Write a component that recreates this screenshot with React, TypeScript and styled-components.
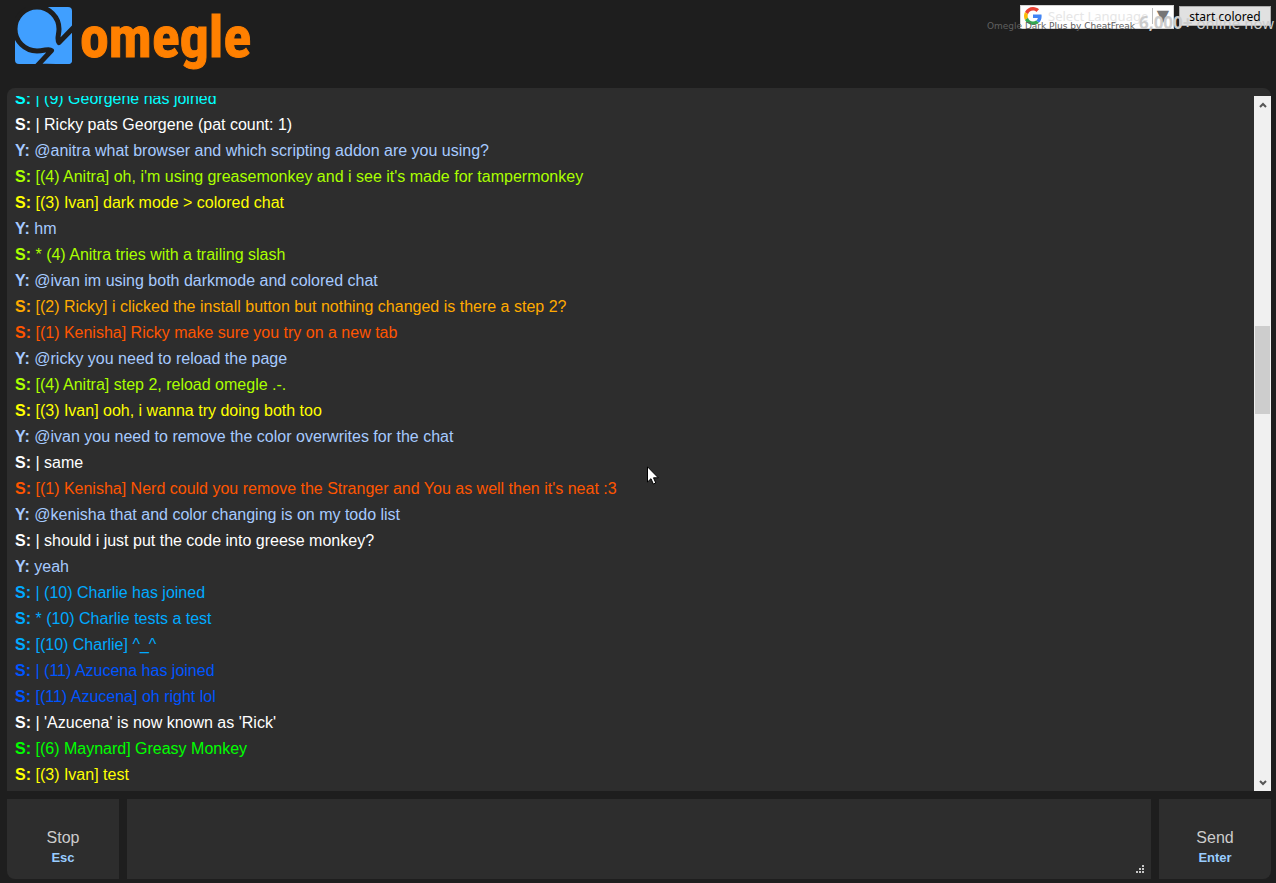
import React from "react";
import styled, { createGlobalStyle } from "styled-components";

const Global = createGlobalStyle`
  * { box-sizing: border-box; }
  body { margin: 0; background: #1e1e1e; font-family: "Liberation Sans", Arial, sans-serif; font-size: 16px; }
`;

const Page = styled.div`
  display: flex;
  flex-direction: column;
  height: 100vh;
  padding: 0 5px 4px 7px;
`;

const Header = styled.header`
  position: relative;
  display: flex;
  justify-content: space-between;
  align-items: flex-start;
  flex: none;
  height: 88px;
  padding: 5px 0 0 8px;
`;

const Brand = styled.a`
  display: flex;
  gap: 8px;
  padding-top: 2px;
  color: #ff8000;
  text-decoration: none;
`;

const Wordmark = styled.span`
  font: bold 58px/60px "Liberation Sans Narrow", "Roboto Condensed", "Open Sans", sans-serif;
  -webkit-text-stroke: 1px #ff8000;
`;

const Tools = styled.div`
  display: flex;
  gap: 5px;
`;

const Translate = styled.button`
  display: flex;
  align-items: center;
  width: 154px;
  height: 24px;
  padding: 0 4px 2px 3px;
  border: 1px solid #d5d5d5;
  background: #fff;
  color: #e6e6e6;
  font: 13px "Noto Sans", sans-serif;
  white-space: nowrap;

  svg { flex: none; }
`;

const Language = styled.span`
  flex: 1;
  padding-left: 6px;
  text-align: left;
`;

const Arrow = styled.span`
  border-left: 1px solid #bbb;
  padding-left: 4px;
  color: #767676;
  font: 16px/16px "DejaVu Sans", sans-serif;
`;

const StartButton = styled.button`
  width: 92px;
  height: 20px;
  margin-top: 1px;
  padding: 0;
  border: 1px solid #adadad;
  background: #e1e1e1;
  color: #000;
  font: 12px "Noto Sans", sans-serif;
`;

const Status = styled.div`
  position: absolute;
  top: 13px;
  right: -3px;
  display: flex;
  align-items: baseline;
  gap: 4px;
  white-space: nowrap;
  pointer-events: none;
  color: #ccc;
  font: 15px/20px "Noto Sans", sans-serif;

  b { font-size: 17px; }
`;

const Credit = styled.span`
  color: #606060;
  font: 9px/20px "DejaVu Sans", sans-serif;
`;

const Chat = styled.main`
  display: flex;
  flex: 1;
  min-height: 0;
  padding-top: 8px;
  border-radius: 8px 8px 0 0;
  background: #2d2d2d;
`;

const Log = styled.div`
  display: flex;
  flex: 1;
  flex-direction: column;
  justify-content: flex-end;
  overflow: hidden;
  padding: 0 8px 3px;
`;

const Message = styled.p<{ $color: string }>`
  flex: none;
  margin: 0;
  line-height: 26px;
  color: ${(p) => p.$color};
`;

const Scrollbar = styled.div`
  display: flex;
  flex-direction: column;
  width: 17px;
  padding: 0 1px;
  background: #f0f0f0;
`;

const ScrollButton = styled.button`
  display: flex;
  flex: none;
  align-items: center;
  justify-content: center;
  height: 17px;
  padding: 0;
  border: 0;
  background: none;
`;

const Track = styled.div`
  display: flex;
  flex: 1;
  flex-direction: column;
`;

const Space = styled.div<{ $grow: number }>`
  flex: ${(p) => p.$grow} 0 0;
`;

const Thumb = styled.div`
  flex: 88 0 0;
  background: #cdcdcd;
`;

const Controls = styled.footer`
  display: flex;
  flex: none;
  gap: 8px;
  height: 80px;
  margin-top: 8px;
`;

const ChatButton = styled.button<{ $corner: string }>`
  display: flex;
  flex: none;
  flex-direction: column;
  align-items: center;
  justify-content: flex-start;
  width: 112px;
  padding: 29px 0 0;
  border: 0;
  border-radius: ${(p) => p.$corner};
  background: #2d2d2d;
  color: #ccc;
  font: 16px/20px "Liberation Sans", Arial, sans-serif;
`;

const Shortcut = styled.span`
  color: #9cf;
  font-size: 13px;
  font-weight: bold;
`;

const Composer = styled.div`
  position: relative;
  display: flex;
  flex: 1;
`;

const Input = styled.textarea`
  flex: 1;
  padding: 8px;
  border: 0;
  outline: 0;
  resize: none;
  background: #2d2d2d;
  color: #ccc;
  font: inherit;
`;

const Grip = styled.svg`
  position: absolute;
  right: 7px;
  bottom: 6px;
`;

const Pointer = styled.svg`
  position: fixed;
  left: 647px;
  top: 466px;
  pointer-events: none;
`;

const cyan = "#00ffff";
const white = "#ffffff";
const you = "#a6caff";
const lime = "#aaff00";
const yellow = "#ffff00";
const orange = "#ffaa00";
const red = "#ff5500";
const sky = "#00aaff";
const blue = "#0055ff";
const green = "#00ff00";

const messages: [string, string, string][] = [
  ["S:", "| (9) Georgene has joined", cyan],
  ["S:", "| Ricky pats Georgene (pat count: 1)", white],
  ["Y:", "@anitra what browser and which scripting addon are you using?", you],
  ["S:", "[(4) Anitra] oh, i'm using greasemonkey and i see it's made for tampermonkey", lime],
  ["S:", "[(3) Ivan] dark mode > colored chat", yellow],
  ["Y:", "hm", you],
  ["S:", "* (4) Anitra tries with a trailing slash", lime],
  ["Y:", "@ivan im using both darkmode and colored chat", you],
  ["S:", "[(2) Ricky] i clicked the install button but nothing changed is there a step 2?", orange],
  ["S:", "[(1) Kenisha] Ricky make sure you try on a new tab", red],
  ["Y:", "@ricky you need to reload the page", you],
  ["S:", "[(4) Anitra] step 2, reload omegle .-.", lime],
  ["S:", "[(3) Ivan] ooh, i wanna try doing both too", yellow],
  ["Y:", "@ivan you need to remove the color overwrites for the chat", you],
  ["S:", "| same", white],
  ["S:", "[(1) Kenisha] Nerd could you remove the Stranger and You as well then it's neat :3", red],
  ["Y:", "@kenisha that and color changing is on my todo list", you],
  ["S:", "| should i just put the code into greese monkey?", white],
  ["Y:", "yeah", you],
  ["S:", "| (10) Charlie has joined", sky],
  ["S:", "* (10) Charlie tests a test", sky],
  ["S:", "[(10) Charlie] ^_^", sky],
  ["S:", "| (11) Azucena has joined", blue],
  ["S:", "[(11) Azucena] oh right lol", blue],
  ["S:", "| 'Azucena' is now known as 'Rick'", white],
  ["S:", "[(6) Maynard] Greasy Monkey", green],
  ["S:", "[(3) Ivan] test", yellow],
];

const LogoMark = () => (
  <svg width="57" height="57" viewBox="0 0 57 57" aria-hidden="true">
    <clipPath id="tile"><rect width="57" height="57" rx="4" /></clipPath>
    <g clipPath="url(#tile)">
      <path d="M33 0H57V57H0V33Z" fill="#409fff" />
      <path
        d="M22 59L36.500 43.500C34 41 30 44 22 44A22 22 0 0 1 22 0C34 0 44 10 44 22C44 28 41.500 32 44 35.500L60 19V60Z"
        fill="#409fff"
        stroke="#1e1e1e"
        strokeWidth="5"
        strokeLinejoin="round"
      />
    </g>
  </svg>
);

const GoogleMark = () => (
  <svg width="18" height="18" viewBox="0 0 48 48" aria-hidden="true">
    <path fill="#EA4335" d="M24 9.5c3.54 0 6.71 1.22 9.21 3.6l6.85-6.85C35.9 2.38 30.47 0 24 0 14.62 0 6.51 5.38 2.56 13.22l7.98 6.19C12.43 13.72 17.74 9.5 24 9.5z" />
    <path fill="#4285F4" d="M46.98 24.55c0-1.57-.15-3.09-.38-4.55H24v9.02h12.94c-.58 2.96-2.26 5.48-4.78 7.18l7.73 6c4.51-4.18 7.09-10.36 7.09-17.65z" />
    <path fill="#FBBC05" d="M10.53 28.59c-.48-1.45-.76-2.99-.76-4.59s.27-3.14.76-4.59l-7.98-6.19C.92 16.46 0 20.12 0 24c0 3.88.92 7.54 2.56 10.78l7.97-6.19z" />
    <path fill="#34A853" d="M24 48c6.48 0 11.93-2.13 15.89-5.81l-7.73-6c-2.15 1.45-4.92 2.3-8.16 2.3-6.26 0-11.57-4.22-13.47-9.91l-7.98 6.19C6.51 42.62 14.62 48 24 48z" />
  </svg>
);

export default function App() {
  return (
    <>
      <Global />
      <Page>
        <Header>
          <Brand href="#">
            <LogoMark />
            <Wordmark>omegle</Wordmark>
          </Brand>
          <Tools>
            <Translate>
              <GoogleMark />
              <Language>Select Language</Language>
              <Arrow>▼</Arrow>
            </Translate>
            <StartButton>start colored</StartButton>
          </Tools>
          <Status>
            <Credit>Omegle Dark Plus by CheatFreak</Credit>
            <span><b>6,000+</b> online now</span>
          </Status>
        </Header>
        <Chat>
          <Log>
            {messages.map(([who, text, color], i) => (
              <Message key={i} $color={color}>
                <b>{who}</b> {text}
              </Message>
            ))}
          </Log>
          <Scrollbar>
            <ScrollButton aria-label="Scroll up">
              <svg width="8" height="6" viewBox="0 0 8 6"><path d="M1 5L4 2L7 5" fill="none" stroke="#555" strokeWidth="2" /></svg>
            </ScrollButton>
            <Track>
              <Space $grow={213} />
              <Thumb />
              <Space $grow={360} />
            </Track>
            <ScrollButton aria-label="Scroll down">
              <svg width="8" height="6" viewBox="0 0 8 6"><path d="M1 1L4 4L7 1" fill="none" stroke="#555" strokeWidth="2" /></svg>
            </ScrollButton>
          </Scrollbar>
        </Chat>
        <Controls>
          <ChatButton $corner="0 0 0 8px">
            Stop
            <Shortcut>Esc</Shortcut>
          </ChatButton>
          <Composer>
            <Input aria-label="Message" />
            <Grip width="8" height="8" viewBox="0 0 8 8" fill="#c8c8c8" aria-hidden="true">
              <path d="M6 0h2v2h-2zM3 3h2v2h-2zM6 3h2v2h-2zM0 6h2v2h-2zM3 6h2v2h-2zM6 6h2v2h-2z" />
            </Grip>
          </Composer>
          <ChatButton $corner="0 0 8px 0">
            Send
            <Shortcut>Enter</Shortcut>
          </ChatButton>
        </Controls>
      </Page>
      <Pointer width="12" height="19" viewBox="0 0 12 19" aria-hidden="true">
        <path d="M.5 .8V16L4 12.7L6.3 18L8.8 17L6.5 11.8H11.3Z" fill="#fff" stroke="#000" />
      </Pointer>
    </>
  );
}
